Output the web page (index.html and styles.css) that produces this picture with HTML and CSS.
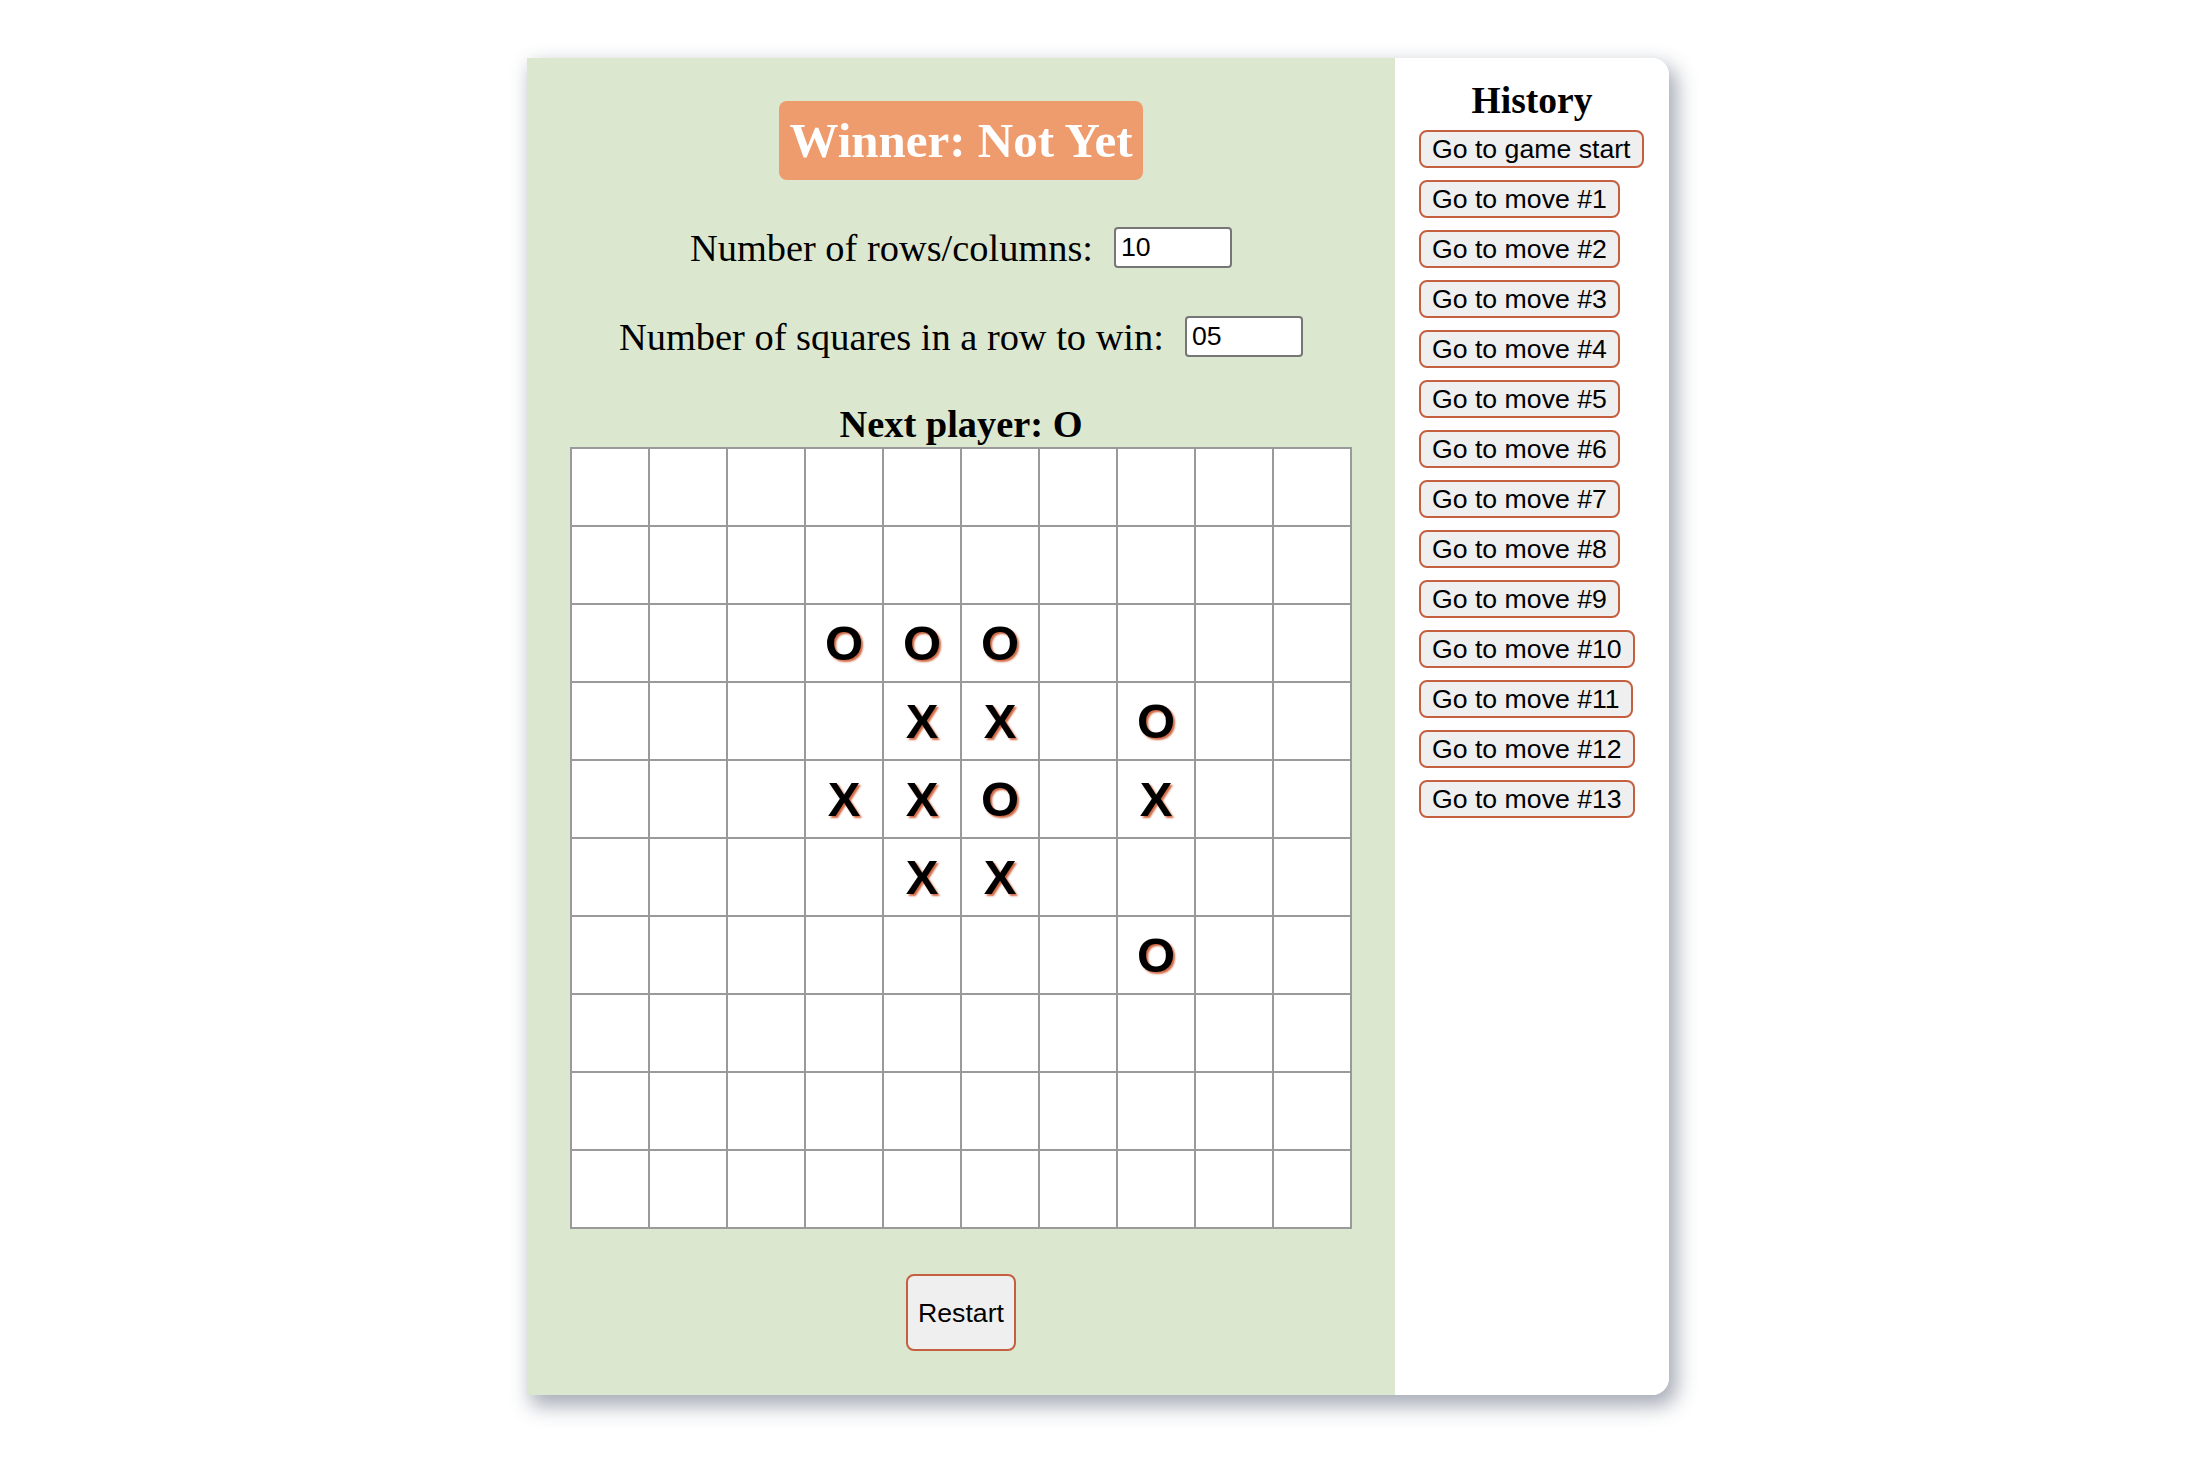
FILE: index.html
```html
<!DOCTYPE html>
<html lang="en">
<head>
<meta charset="utf-8">
<title>Tic Tac Toe</title>
<link rel="stylesheet" href="styles.css">
</head>
<body>
<div class="page">
<div class="app">
  <section class="game">
    <div class="winner">Winner: Not Yet</div>
    <div class="setting setting-first">
      <label class="setting-label" for="size">Number of rows/columns:</label>
      <input class="setting-input" id="size" type="text" value="10">
    </div>
    <div class="setting">
      <label class="setting-label" for="win">Number of squares in a row to win:</label>
      <input class="setting-input" id="win" type="text" value="05">
    </div>
    <div class="status">Next player: O</div>
    <div class="board">
      <div class="cell"></div><div class="cell"></div><div class="cell"></div><div class="cell"></div><div class="cell"></div><div class="cell"></div><div class="cell"></div><div class="cell"></div><div class="cell"></div><div class="cell"></div>
      <div class="cell"></div><div class="cell"></div><div class="cell"></div><div class="cell"></div><div class="cell"></div><div class="cell"></div><div class="cell"></div><div class="cell"></div><div class="cell"></div><div class="cell"></div>
      <div class="cell"></div><div class="cell"></div><div class="cell"></div><div class="cell">O</div><div class="cell">O</div><div class="cell">O</div><div class="cell"></div><div class="cell"></div><div class="cell"></div><div class="cell"></div>
      <div class="cell"></div><div class="cell"></div><div class="cell"></div><div class="cell"></div><div class="cell">X</div><div class="cell">X</div><div class="cell"></div><div class="cell">O</div><div class="cell"></div><div class="cell"></div>
      <div class="cell"></div><div class="cell"></div><div class="cell"></div><div class="cell">X</div><div class="cell">X</div><div class="cell">O</div><div class="cell"></div><div class="cell">X</div><div class="cell"></div><div class="cell"></div>
      <div class="cell"></div><div class="cell"></div><div class="cell"></div><div class="cell"></div><div class="cell">X</div><div class="cell">X</div><div class="cell"></div><div class="cell"></div><div class="cell"></div><div class="cell"></div>
      <div class="cell"></div><div class="cell"></div><div class="cell"></div><div class="cell"></div><div class="cell"></div><div class="cell"></div><div class="cell"></div><div class="cell">O</div><div class="cell"></div><div class="cell"></div>
      <div class="cell"></div><div class="cell"></div><div class="cell"></div><div class="cell"></div><div class="cell"></div><div class="cell"></div><div class="cell"></div><div class="cell"></div><div class="cell"></div><div class="cell"></div>
      <div class="cell"></div><div class="cell"></div><div class="cell"></div><div class="cell"></div><div class="cell"></div><div class="cell"></div><div class="cell"></div><div class="cell"></div><div class="cell"></div><div class="cell"></div>
      <div class="cell"></div><div class="cell"></div><div class="cell"></div><div class="cell"></div><div class="cell"></div><div class="cell"></div><div class="cell"></div><div class="cell"></div><div class="cell"></div><div class="cell"></div>
    </div>
    <button class="btn restart" type="button">Restart</button>
  </section>
  <aside class="history">
    <h3 class="history-title">History</h3>
    <ol class="moves">
      <li><button class="btn move" type="button">Go to game start</button></li>
      <li><button class="btn move" type="button">Go to move #1</button></li>
      <li><button class="btn move" type="button">Go to move #2</button></li>
      <li><button class="btn move" type="button">Go to move #3</button></li>
      <li><button class="btn move" type="button">Go to move #4</button></li>
      <li><button class="btn move" type="button">Go to move #5</button></li>
      <li><button class="btn move" type="button">Go to move #6</button></li>
      <li><button class="btn move" type="button">Go to move #7</button></li>
      <li><button class="btn move" type="button">Go to move #8</button></li>
      <li><button class="btn move" type="button">Go to move #9</button></li>
      <li><button class="btn move" type="button">Go to move #10</button></li>
      <li><button class="btn move" type="button">Go to move #11</button></li>
      <li><button class="btn move" type="button">Go to move #12</button></li>
      <li><button class="btn move" type="button">Go to move #13</button></li>
    </ol>
  </aside>
</div>
</div>
</body>
</html>
```

FILE: styles.css
```css
* { box-sizing: border-box; }

html, body {
  margin: 0;
  padding: 0;
  background: #ffffff;
}

body {
  font-family: "Liberation Serif", "Times New Roman", serif;
  color: #000;
}

.page {
  min-height: 1462px;
  padding: 58px 0 67px 527px;
}

.app {
  display: flex;
  width: 1142px;
  height: 1337px;
  border-radius: 0 17px 17px 0;
  box-shadow: 6px 9px 20px 2px rgba(60, 72, 95, 0.45);
}

.game {
  width: 868px;
  background: #dce7cf;
  display: flex;
  flex-direction: column;
  align-items: center;
  padding-top: 43px;
}

.winner {
  background: #ee9b6d;
  color: #fff;
  font-weight: bold;
  font-size: 49px;
  line-height: 59px;
  padding: 10px 11px;
  border-radius: 8px;
  white-space: nowrap;
}

.setting {
  display: flex;
  align-items: center;
  justify-content: center;
  gap: 21px;
  margin-top: 48px;
  height: 41px;
}

.setting-first {
  margin-top: 47px;
}

.setting-label {
  font-size: 38.4px;
  line-height: 44px;
  white-space: nowrap;
}

.setting-input {
  width: 118px;
  height: 41px;
  border: 2px solid #767676;
  border-radius: 4px;
  background: #fff;
  font-family: "Liberation Sans", Arial, sans-serif;
  font-size: 26.67px;
  padding: 0 5px;
  color: #000;
}

.status {
  margin-top: 45px;
  font-size: 38.4px;
  font-weight: bold;
  line-height: 44px;
  height: 44px;
}

.board {
  margin-top: 1px;
  display: grid;
  grid-template-columns: repeat(10, 76px);
  grid-auto-rows: 76px;
  gap: 2px;
  padding: 2px;
  background: #9a9a9a;
}

.cell {
  background: #fff;
  display: flex;
  align-items: center;
  justify-content: center;
  font-family: "Liberation Sans", Arial, sans-serif;
  font-weight: bold;
  font-size: 49px;
  line-height: 1;
  color: #000;
  text-shadow: 2px 2px 2px rgba(205, 95, 55, 0.95);
}

.btn {
  font-family: "Liberation Sans", Arial, sans-serif;
  font-size: 26.67px;
  line-height: 30px;
  color: #000;
  background: #efefef;
  border: 2px solid #c4603f;
  border-radius: 8px;
  cursor: pointer;
  white-space: nowrap;
}

.restart {
  margin-top: 45px;
  padding: 21.5px 10.5px;
  border-radius: 8px;
}

.history {
  width: 274px;
  background: #fff;
  border-radius: 0 17px 17px 0;
  padding: 21px 0 0 24px;
}

.history-title {
  margin: 0 0 8px -24px;
  text-align: center;
  font-size: 37.5px;
  font-weight: bold;
  line-height: 43px;
}

.moves {
  list-style: none;
  margin: 0;
  padding: 0;
  display: flex;
  flex-direction: column;
  align-items: flex-start;
  gap: 12px;
}

.moves li {
  display: block;
}

.move {
  padding: 2px 11px;
  height: 38px;
}
```
